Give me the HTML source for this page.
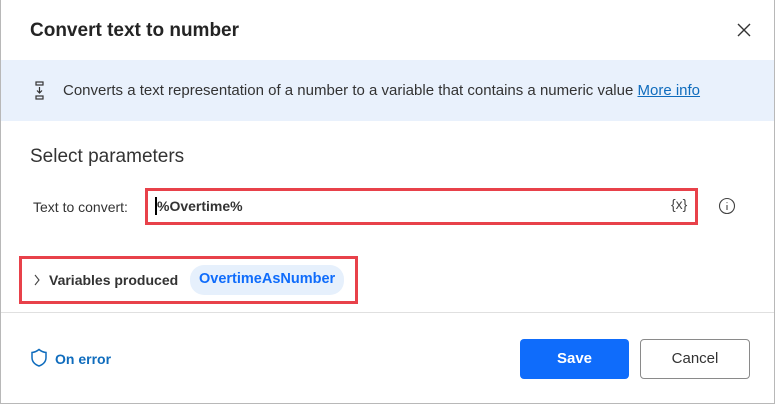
<!DOCTYPE html><html><head><style>
*{margin:0;padding:0;box-sizing:border-box}
body{width:775px;height:404px;background:#fff;font-family:"Liberation Sans",sans-serif;color:#242424;position:relative;overflow:hidden}
.frame{position:absolute;left:0;top:0;width:775px;height:404px;border:1px solid #b8b8b8;border-top:none}
.a{position:absolute}
</style></head><body>
<div class="frame"></div>
<div class="a" style="left:30px;top:20px;font-size:19px;font-weight:bold;color:#242424">Convert text to number</div>
<svg class="a" style="left:737px;top:23px" width="14" height="14"><path d="M1 1L13 13M13 1L1 13" stroke="#333" stroke-width="1.4"/></svg>
<div class="a" style="left:1px;top:60px;width:773px;height:61px;background:#e9f1fc"></div>
<svg class="a" style="left:34px;top:81px" width="12" height="20" fill="none" stroke="#333" stroke-width="1.2"><rect x="2" y="1" width="7" height="3"/><rect x="2" y="15" width="7" height="3"/><path d="M5.5 6v6M3 9.5l2.5 2.5 2.5-2.5"/></svg>
<div class="a" style="left:63px;top:82px;font-size:15px;color:#333">Converts a text representation of a number to a variable that contains a numeric value <span style="color:#0f6cbd;text-decoration:underline">More info</span></div>
<div class="a" style="left:30px;top:146px;font-size:19px;color:#333">Select parameters</div>
<div class="a" style="left:33px;top:199px;font-size:14px;color:#333">Text to convert:</div>
<div class="a" style="left:145px;top:188px;width:553px;height:37px;border:3px solid #e8414a"></div>
<div class="a" style="left:155px;top:197px;width:1.5px;height:18px;background:#000"></div>
<div class="a" style="left:157px;top:198px;font-size:14px;font-weight:bold;color:#333">%Overtime%</div>
<div class="a" style="left:671px;top:196px;font-size:14px;color:#444">{x}</div>
<svg class="a" style="left:718px;top:197px" width="18" height="18" fill="none" stroke="#444" stroke-width="1.1"><circle cx="9" cy="9" r="7.5"/><path d="M9 8v5M9 5.3v.8"/></svg>
<div class="a" style="left:19px;top:256px;width:339px;height:48px;border:3px solid #e8414a"></div>
<svg class="a" style="left:33px;top:274px" width="8" height="12" fill="none" stroke="#444" stroke-width="1.1"><path d="M2 1l4 5-4 5"/></svg>
<div class="a" style="left:49px;top:272px;font-size:14px;font-weight:bold;color:#333">Variables produced</div>
<div class="a" style="left:190px;top:265px;width:154px;height:30px;border-radius:14px;background:#e6f0fc"></div>
<div class="a" style="left:199px;top:271px;font-size:14.5px;font-weight:bold;color:#0f6cfb">OvertimeAsNumber</div>
<div class="a" style="left:1px;top:312px;width:773px;height:1px;background:#e0e0e0"></div>
<svg class="a" style="left:30px;top:348px" width="18" height="20" fill="none" stroke="#0f6cbd" stroke-width="1.5"><path d="M9 1.5C6.5 3.5 4.5 4.3 2 4.5v5c0 4.5 3.5 7.2 7 8.5 3.5-1.3 7-4 7-8.5v-5c-2.5-.2-4.5-1-7-3z"/></svg>
<div class="a" style="left:55px;top:351px;font-size:14px;font-weight:bold;color:#0f6cbd">On error</div>
<div class="a" style="left:520px;top:339px;width:109px;height:40px;background:#0f6cfb;border-radius:4px;color:#fff;font-size:15px;font-weight:bold;text-align:center;line-height:40px">Save</div>
<div class="a" style="left:640px;top:339px;width:110px;height:40px;border:1px solid #8a8a8a;border-radius:4px;color:#333;font-size:15px;text-align:center;line-height:38px">Cancel</div>
</body></html>
